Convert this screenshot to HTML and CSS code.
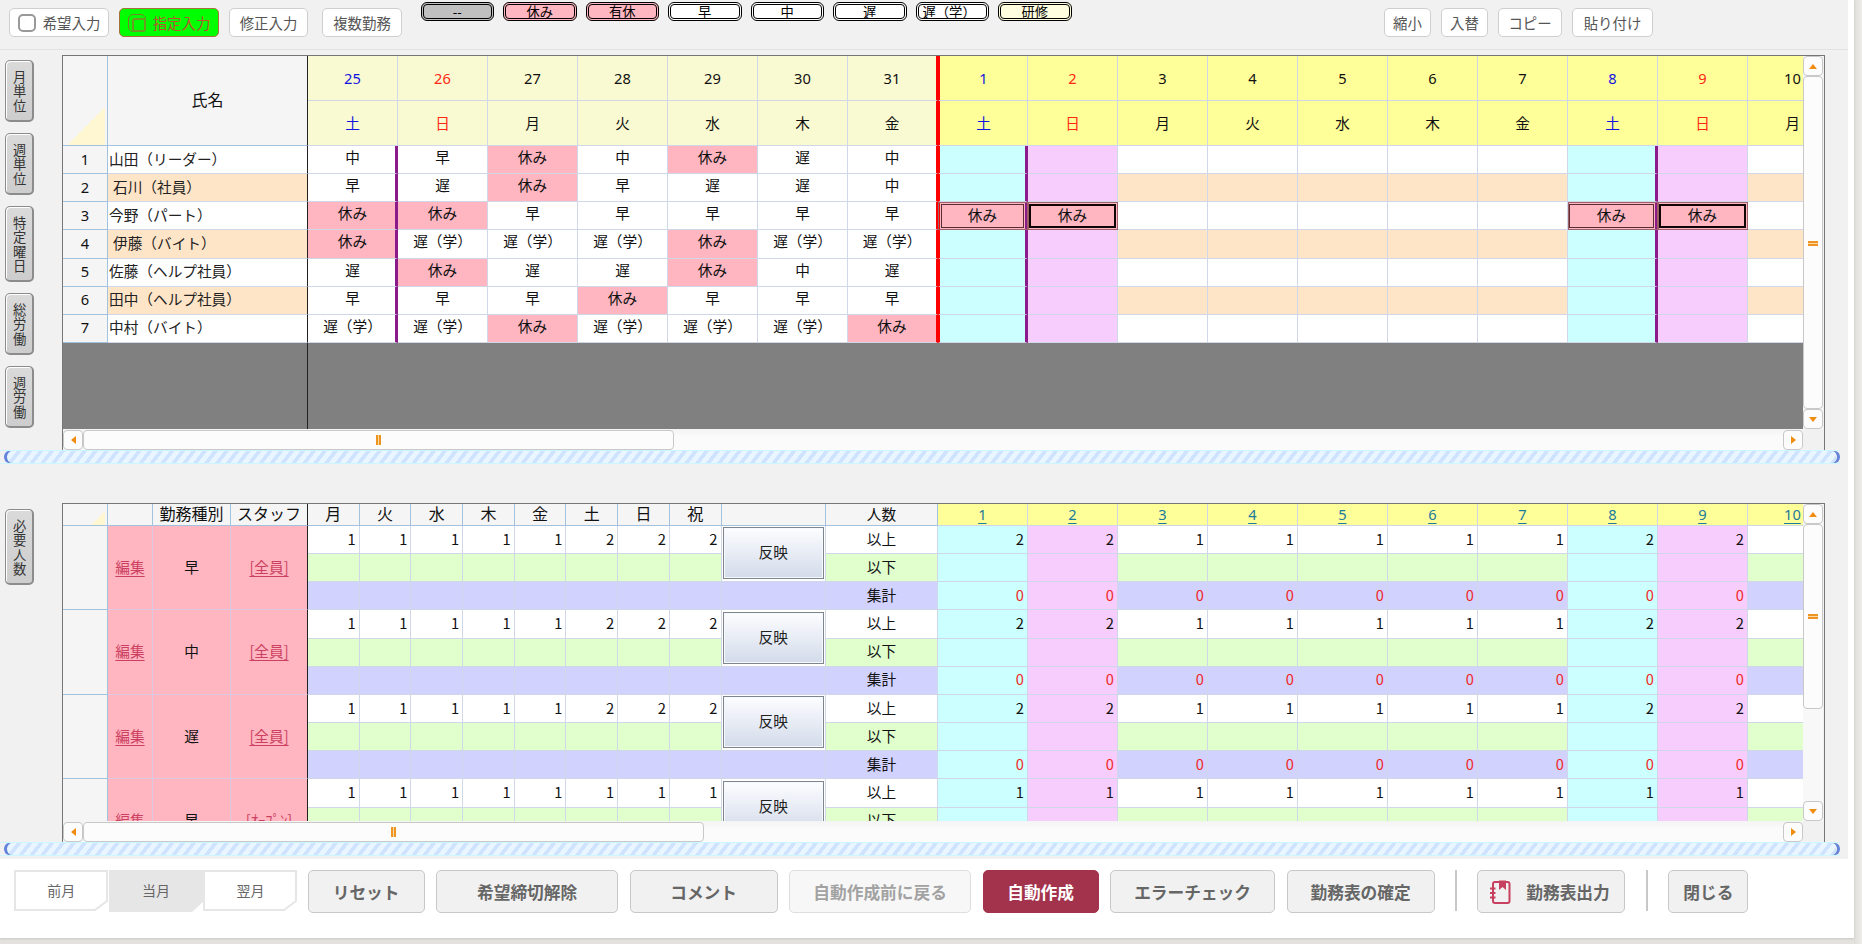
FILE: index.html
```html
<!DOCTYPE html>
<html lang="ja">
<head>
<meta charset="utf-8">
<title>勤務表</title>
<link rel="stylesheet" href="styles.css">
</head>
<body>
<div class="page">
  <div class="panel">
    <div class="work">
      <header class="toolbar">
        <button class="tool tool-wish"><span class="box"></span>希望入力</button>
        <button class="tool tool-assign"><span class="box box-on"></span>指定入力</button>
        <button class="tool tool-fix">修正入力</button>
        <button class="tool tool-multi">複数勤務</button>
        <div class="legend">
          <span class="shift shift-none">--</span>
          <span class="shift shift-off">休み</span>
          <span class="shift shift-off">有休</span>
          <span class="shift">早</span>
          <span class="shift">中</span>
          <span class="shift">遅</span>
          <span class="shift shift-long">遅（学）</span>
          <span class="shift shift-train">研修</span>
        </div>
        <div class="edit">
          <button class="tool e1">縮小</button>
          <button class="tool e1">入替</button>
          <button class="tool e2">コピー</button>
          <button class="tool e3">貼り付け</button>
        </div>
      </header>

      <section class="block block-top">
        <nav class="side">
          <button class="vtab">月単位</button>
          <button class="vtab">週単位</button>
          <button class="vtab vtab-4">特定曜日</button>
          <button class="vtab">総労働</button>
          <button class="vtab">週労働</button>
        </nav>
        <div class="sheet">
          <div class="view">
            <div class="grid roster" id="roster"></div>
            <div class="vbar">
              <span class="arrow"><i class="up"></i></span>
              <span class="thumb"><i class="grip-h"></i></span>
              <span class="arrow"><i class="down"></i></span>
            </div>
          </div>
          <div class="hbar">
            <span class="arrow"><i class="left"></i></span>
            <span class="thumb"><i class="grip-v"></i></span>
            <span class="space"></span>
            <span class="arrow"><i class="right"></i></span>
          </div>
        </div>
      </section>
      <div class="splitter"></div>

      <section class="block block-bottom">
        <nav class="side">
          <button class="vtab vtab-4">必要人数</button>
        </nav>
        <div class="sheet">
          <div class="view">
            <div class="grid needs" id="needs"></div>
            <div class="vbar">
              <span class="arrow"><i class="up"></i></span>
              <span class="thumb"><i class="grip-h"></i></span>
              <span class="space"></span>
              <span class="arrow"><i class="down"></i></span>
            </div>
          </div>
          <div class="hbar">
            <span class="arrow"><i class="left"></i></span>
            <span class="thumb"><i class="grip-v"></i></span>
            <span class="space"></span>
            <span class="arrow"><i class="right"></i></span>
          </div>
        </div>
      </section>
      <div class="splitter"></div>
    </div>

    <footer class="footer">
      <div class="months">
        <svg class="months-bg" width="284" height="43" viewBox="0 0 284 43">
          <path d="M1 1H93V31L81 40H1Z" fill="#fff" stroke="#e6e6e6" stroke-width="2"/>
          <path d="M95 0H190V31L178 42H95Z" fill="#e6e6e6"/>
          <path d="M190 1H282V31L270 40H190Z" fill="#fff" stroke="#e6e6e6" stroke-width="2"/>
        </svg>
        <span>前月</span><span>当月</span><span>翌月</span>
      </div>
      <button class="act w117">リセット</button>
      <button class="act w182">希望締切解除</button>
      <button class="act w148">コメント</button>
      <button class="act w182 disabled">自動作成前に戻る</button>
      <button class="act w116 primary">自動作成</button>
      <button class="act w165">エラーチェック</button>
      <button class="act w148">勤務表の確定</button>
      <span class="sep"></span>
      <button class="act w148 with-icon">
        <svg width="22" height="26" viewBox="0 0 22 26" fill="none" stroke="#c8405f" stroke-width="2">
          <rect x="4" y="3" width="16.500" height="21" rx="2"/>
          <path d="M1 9.500H6.500M1 14H6.500M1 18.500H6.500" stroke-width="1.800"/>
          <path d="M10 1.500H17V11L13.500 8L10 11Z" fill="#c8405f" stroke="none"/>
        </svg>
        勤務表出力
      </button>
      <span class="sep"></span>
      <button class="act w80">閉じる</button>
    </footer>
  </div>
</div>
<script src="app.js"></script>
</body>
</html>
```
FILE: styles.css
```css
* { box-sizing: border-box; }
body {
  margin: 0;
  width: 1862px;
  height: 944px;
  overflow: hidden;
  font-family: "Noto Sans CJK JP", sans-serif;
  color: #111;
}
button { font: inherit; padding: 0; }
.page {
  height: 944px;
  padding-right: 8px;
  background: linear-gradient(90deg, transparent 1854px, #dfddd8 1854px, #efedea 1862px), #e3e2df;
}
.panel { height: 938px; background: #fff; box-shadow: 0 1px 2px #c9c9c4; }
.work { width: 1848px; height: 859px; background: #f1f1f1; }

/* toolbar */
.toolbar {
  display: flex;
  align-items: flex-start;
  height: 50px;
  padding: 8px 0 0 9px;
  border-bottom: 1px solid #e2e2e2;
}
.tool {
  flex: none;
  display: flex;
  align-items: center;
  justify-content: center;
  height: 29px;
  border: 1px solid #cfcfcf;
  border-radius: 5px;
  background: #fff;
  color: #555;
  font-size: 14.4px;
  line-height: 20px;
}
.tool-wish { width: 100px; }
.tool-assign { width: 100px; margin-left: 10px; background: #0f0; border-color: #a8703c; color: #b5562c; }
.tool-fix { width: 79px; margin-left: 10px; }
.tool-multi { width: 80px; margin-left: 14px; }
.box {
  width: 18px;
  height: 18px;
  margin-right: 7px;
  border: 2px solid #999;
  border-radius: 5px;
  background: #fff;
}
.box-on { background: #0f0; border: 1px solid #7a7f2c; padding: 3px; }
.box-on::before {
  content: "";
  display: block;
  width: 10px;
  height: 10px;
  border: 2px solid #6f9a22;
  border-radius: 3px;
}
.legend { display: flex; gap: 9px; margin: -6px 0 0 18.500px; }
.shift {
  flex: none;
  width: 73.500px;
  height: 19px;
  border: 3px double #000;
  border-radius: 6px;
  background: #fff;
  color: #000;
  font-size: 13.300px;
  line-height: 13px;
  text-align: center;
  white-space: nowrap;
}
.shift-none { background: #c0c0c0; }
.shift-off { background: #ffb6c1; }
.shift-train { background: #ffffe0; }
.shift-long { text-align: left; padding-left: 4px; }
.edit { display: flex; gap: 10px; margin-left: 312.500px; }
.e1 { width: 47px; }
.e2 { width: 64px; }
.e3 { width: 81px; }

/* blocks */
.block { display: flex; }
.block-top { height: 400px; padding-top: 5px; }
.block-bottom { height: 378px; padding-top: 39px; }
.side { width: 62px; flex: none; padding: 5px 0 0 5px; display: flex; flex-direction: column; gap: 11px; }
.block-bottom .side { padding-top: 6px; }
.vtab {
  width: 29px;
  height: 62px;
  border: 2px solid #8c8c8c;
  border-top-width: 1px;
  border-left-width: 1px;
  border-radius: 5px;
  background: linear-gradient(#dadada, #cdcdcd);
  box-shadow: inset 1px 1px 0 #fff;
  color: #333;
  font-size: 13.300px;
  letter-spacing: 1.200px;
  line-height: 14.500px;
  padding-top: 2px;
  display: flex;
  align-items: center;
  justify-content: center;
  writing-mode: vertical-rl;
}
.vtab-4 { height: 76px; }
.sheet { width: 1763px; border: 1px solid #777; border-bottom: 0; display: flex; flex-direction: column; }
.view { display: flex; overflow: hidden; }
.block-top .view { height: 373px; }
.block-bottom .view { height: 317px; }

/* scroll bars */
.vbar { width: 20px; flex: none; display: flex; flex-direction: column; background: #f8f8f8; }
.hbar { height: 21px; width: 1740px; display: flex; padding-top: 1px; background: linear-gradient(#f4f4f4, #fbfbfb 40%); }
.arrow, .thumb {
  flex: none;
  display: flex;
  align-items: center;
  justify-content: center;
  border: 1px solid #c8c8c8;
  border-radius: 4px;
  background: #fcfcfc;
}
.arrow { width: 20px; height: 20px; }
.vbar .thumb { width: 20px; height: 333px; padding-top: 2px; }
.hbar .thumb { width: 591px; height: 20px; }
.block-bottom .vbar .thumb { height: 185px; padding-top: 0; }
.block-bottom .hbar .thumb { width: 621px; }
.space { flex: 1; }
.up, .down, .left, .right { width: 0; height: 0; border: 4px solid transparent; }
.up { border-bottom: 5px solid #f08c10; border-top: 0; }
.down { border-top: 5px solid #f08c10; border-bottom: 0; }
.left { border-right: 5px solid #f08c10; border-left: 0; }
.right { border-left: 5px solid #f08c10; border-right: 0; }
.grip-v { width: 5px; height: 10px; border: solid #ee9420; border-width: 0 2px; background: #fbd9a8; }
.grip-h { width: 10px; height: 5px; border: solid #ee9420; border-width: 2px 0; background: #fbd9a8; }

.splitter {
  position: relative;
  width: 1840px;
  height: 14px;
  border: solid #cdf7ff;
  border-width: 1px 0;
  padding: 0 4px 0 6px;
  background: repeating-linear-gradient(128deg, #e9f6ff 0 4.500px, #cfe3ff 4.900px 8.200px, #e9f6ff 8.600px);
  background-clip: content-box;
}
.splitter::before, .splitter::after {
  content: "";
  position: absolute;
  top: 0;
  width: 10px;
  height: 12px;
  border-radius: 50%;
}
.splitter::before { left: 4px; box-shadow: inset 3px 0 0 #6384d8; }
.splitter::after { right: 0; box-shadow: inset -3px 0 0 #6384d8; }

/* grids */
.grid { width: 1740px; flex: none; overflow: hidden; display: grid; background: #808080; }
.roster {
  grid-template-columns: 45px 200px repeat(17, 90px);
  grid-template-rows: 45px 45px repeat(7, 28.140px) 87px;
}
.needs {
  grid-template-columns: 45px 45px 78px 77px repeat(8, 51.700px) 104.400px 112px repeat(10, 90px);
  grid-template-rows: 22px repeat(12, 28.170px);
}
.c {
  display: flex;
  align-items: center;
  justify-content: center;
  padding-bottom: 2px;
  border: solid #cfd7e8;
  border-width: 0 1px 1px 0;
  background: #fff;
  font-size: 14.670px;
  line-height: 20px;
  white-space: nowrap;
  overflow: hidden;
}
.fix { background: #f5f5f5; border-color: #a3c2de; }
.corner { background: linear-gradient(135deg, transparent 50%, #fff6d2 50%) 4px 100% / 38px 38px no-repeat #f5f5f5; }
.needs .corner { background-size: 14px 14px; background-position: 28px 100%; }
.title { font-size: 16px; padding-bottom: 4px; }
.edge { border-right: 1px solid #222; }
.num { font-family: "Noto Sans", "Noto Sans CJK JP", sans-serif; }
.prev, .cur { padding-bottom: 1px; }
.prev { background: #fafad2; }
.cur { background: #ffff99; }
.sat { color: #1414e0; }
.sun { color: #ff2814; }
.name { justify-content: flex-start; padding-left: 1px; color: #222; }
.indent { padding-left: 5px; }
.peach { background: #ffe5c8; }
.day { padding-bottom: 5px; }
.off { background: #ffb6c1; }
.cyan { background: #ccffff; }
.violet { background: #f6cdfd; }
.week { border-right: 3px solid #8b1a8b; padding-left: 2px; }
.month { border-right: 2px solid #f00; }
.first { border-left: 2px solid #f00; }
.picked { padding: 1px; background: #ffb6c1; outline: 1px solid #a06068; outline-offset: -1px; align-items: flex-start; }
.picked span {
  width: 100%;
  height: 24px;
  margin-top: 1px;
  border: 1px solid #5c2c34;
  text-align: center;
  line-height: 19px;
}
.picked.strong span { border: 2px solid #100406; line-height: 17px; }

.pink { background: #ffb6c1; border-color: #dcc8e0; }
.pink.edge { border-right-color: #222; }
.link { color: #cc3f60; text-decoration: underline; text-underline-offset: 3px; }
.green { background: #e0ffcc; }
.blue { background: #d2d2ff; }
.right-num { justify-content: flex-end; padding-right: 3px; }
.zero { color: #f02828; }
.date { color: #1c7a9c; text-decoration: underline; text-underline-offset: 3px; }
.reflect { padding: 2px 1px 3px; }
.reflect button {
  width: 100%;
  height: 52px;
  padding-bottom: 2px;
  border: 1px solid #7e858c;
  background: linear-gradient(#fcfdff, #d3dbea);
  box-shadow: inset 0 0 0 1px #f5f8fc;
  color: #222;
}

/* footer */
.footer { display: flex; align-items: flex-start; padding: 11px 0 0 14px; }
.months { position: relative; display: flex; width: 284px; height: 43px; margin-right: 9.600px; }
.months-bg { position: absolute; inset: 0; }
.months span {
  position: relative;
  width: 94.600px;
  line-height: 41px;
  text-align: center;
  font-size: 14px;
  color: #666;
}
.act {
  flex: none;
  height: 43px;
  margin-right: 11.500px;
  display: flex;
  align-items: center;
  justify-content: center;
  border: 1px solid #c8c8c8;
  border-radius: 5px;
  background: #f1f1f1;
  color: #666;
  font-size: 16.700px;
  font-weight: 700;
}
.act svg { margin: 0 15px 0 -4px; }
.w80 { width: 80px; }
.w116 { width: 116px; }
.w117 { width: 117px; }
.w148 { width: 148px; }
.w165 { width: 165px; }
.w182 { width: 182px; }
.disabled { background: #f7f7f7; border-color: #dedede; color: #a2a2a2; }
.primary { background: #a3324c; border-color: #a3324c; color: #fff; }
.sep { width: 2px; height: 41px; margin: 0 20.600px 0 8.800px; background: #c8c8c8; }
```
FILE: app.js
```js
const week = ['月', '火', '水', '木', '金', '土', '日'];

function cell(cls, text, parent, style) {
  const el = document.createElement('div');
  el.className = 'c ' + cls;
  if (style) el.style.cssText = style;
  if (text) {
    const span = document.createElement('span');
    span.textContent = text;
    el.append(span);
  }
  parent.append(el);
  return el;
}

const columns = [];
for (let i = 0; i < 17; i++) {
  const w = (i + 5) % 7;
  columns.push({
    date: i < 7 ? 25 + i : i - 6,
    label: week[w],
    prev: i < 7,
    tone: w === 5 ? 'sat' : w === 6 ? 'sun' : '',
    last: i === 6,
    first: i === 7
  });
}

/* upper grid: staff by day */
const roster = document.getElementById('roster');
cell('fix corner', '', roster, 'grid-row: 1 / 3');
cell('fix title edge', '氏名', roster, 'grid-row: 1 / 3');
for (const key of ['date', 'label']) {
  for (const d of columns) {
    const line = d.last ? 'month' : d.first ? 'first' : '';
    cell(`num ${d.prev ? 'prev' : 'cur'} ${d.tone} ${line}`, String(d[key]), roster);
  }
}

const staff = [
  ['山田（リーダー）', '中 早 休み 中 休み 遅 中'],
  ['石川（社員）', '早 遅 休み 早 遅 遅 中'],
  ['今野（パート）', '休み 休み 早 早 早 早 早'],
  ['伊藤（バイト）', '休み 遅（学） 遅（学） 遅（学） 休み 遅（学） 遅（学）'],
  ['佐藤（ヘルプ社員）', '遅 休み 遅 遅 休み 中 遅'],
  ['田中（ヘルプ社員）', '早 早 早 休み 早 早 早'],
  ['中村（バイト）', '遅（学） 遅（学） 休み 遅（学） 遅（学） 遅（学） 休み']
];
staff.forEach(([name, shifts], r) => {
  const odd = r % 2 === 1;
  cell('fix num', String(r + 1), roster);
  cell(`name edge ${odd ? 'peach' : ''} ${r === 1 || r === 3 ? 'indent' : ''}`, name, roster);
  const list = shifts.split(' ');
  columns.forEach((d, i) => {
    const text = list[i] || '';
    let cls = 'day';
    if (text === '休み') cls += ' off';
    if (!d.prev) {
      if (d.tone === 'sat') cls += ' cyan';
      else if (d.tone === 'sun') cls += ' violet';
      else if (odd) cls += ' peach';
    }
    if (d.tone === 'sat') cls += ' week';
    if (d.last) cls += ' month';
    if (d.first) cls += ' first';
    if (r === 2 && !d.prev && d.tone) {
      cell(cls + ' picked' + (d.tone === 'sun' ? ' strong' : ''), '休み', roster);
    } else {
      cell(cls, text, roster);
    }
  });
});
cell('edge', '', roster, 'grid-column: 1 / 3; background: #808080');

/* lower grid: required head count */
const needs = document.getElementById('needs');
const dates = columns.slice(7);
cell('fix corner', '', needs);
cell('fix', '', needs);
cell('fix title', '勤務種別', needs);
cell('fix title edge', 'スタッフ', needs);
for (const w of [...week, '祝']) cell('fix title', w, needs);
cell('fix', '', needs);
cell('fix', '人数', needs);
for (const d of dates) cell('num cur date', String(d.date), needs);

const kinds = [
  ['早', '[全員]', 2], ['中', '[全員]', 2], ['遅', '[全員]', 2], ['早', '[ｵｰﾌﾟﾝ]', 1]
];
kinds.forEach(([kind, who, holiday], k) => {
  const top = 2 + k * 3;
  const span = `grid-row: ${top} / ${top + 3}; grid-column: `;
  cell('fix', '', needs, span + 1);
  cell('pink link', '編集', needs, span + 2);
  cell('pink', kind, needs, span + 3);
  cell('pink edge link', who, needs, span + 4);
  const reflect = cell('reflect', '', needs, `grid-row: ${top} / ${top + 2}; grid-column: 13`);
  const button = document.createElement('button');
  button.textContent = '反映';
  reflect.append(button);
  cell('blue', '', needs, `grid-row: ${top + 2}; grid-column: 13`);
  const rows = k === 3 ? ['以上', '以下'] : ['以上', '以下', '集計'];
  rows.forEach((label, r) => {
    const tone = ['', 'green', 'blue'][r];
    const at = (c) => `grid-row: ${top + r}; grid-column: ${c}`;
    for (let i = 0; i < 8; i++) {
      cell('right-num ' + tone, r === 0 ? String(i < 5 ? 1 : holiday) : '', needs, at(5 + i));
    }
    cell(tone, label, needs, at(14));
    dates.forEach((d, i) => {
      const bg = d.tone === 'sat' ? 'cyan' : d.tone === 'sun' ? 'violet' : tone;
      let text = r === 0 ? String(d.tone ? holiday : 1) : r === 2 ? '0' : '';
      if (d.date === 10) text = '';
      cell(`right-num ${bg} ${r === 2 ? 'zero' : ''}`, text, needs, at(15 + i));
    });
  });
});
```
